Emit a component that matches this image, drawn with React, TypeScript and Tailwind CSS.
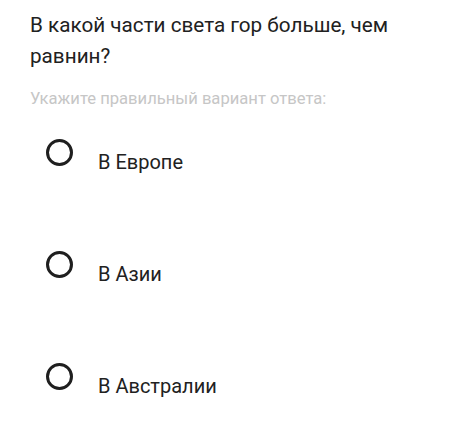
import React from "react";

const options = ["В Европе", "В Азии", "В Австралии"];

export default function App() {
  return (
    <div
      className="w-[461px] h-[429px] bg-white overflow-hidden px-[30px] pt-[10px]"
      style={{ fontFamily: "Roboto, 'Noto Sans', sans-serif" }}
    >
      {/* Question */}
      <h1 className="text-[20.7px] leading-[31px] font-normal text-[#212121]">
        В какой части света гор больше, чем равнин?
      </h1>

      <p className="mt-[17px] text-[16.6px] leading-[20px] text-[#c6c6c6]">
        Укажите правильный вариант ответа:
      </p>

      {/* Answers */}
      <div className="mt-[30px] flex flex-col gap-[77px]">
        {options.map((opt) => (
          <label key={opt} className="flex items-start ml-[16px]">
            <span className="w-[27px] h-[27px] rounded-full border-[3px] border-[#1f1f1f] shrink-0" />
            <span className="ml-[25px] mt-[11px] text-[20px] leading-[24px] text-[#212121]">
              {opt}
            </span>
          </label>
        ))}
      </div>
    </div>
  );
}
